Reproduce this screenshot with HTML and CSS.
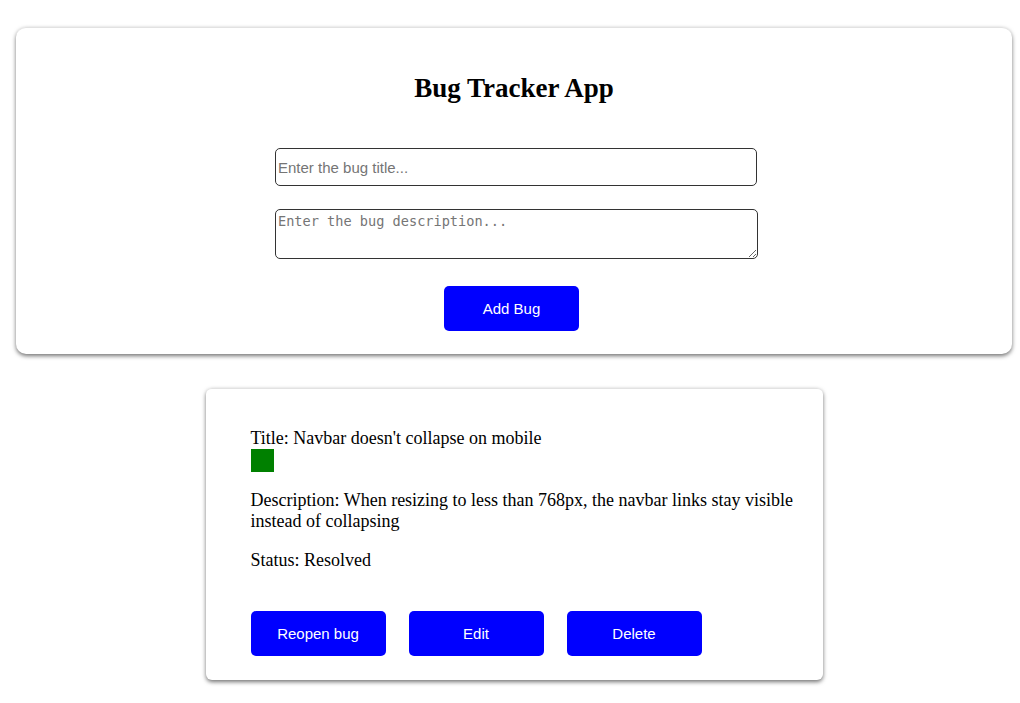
FILE: index.html
```html
<!DOCTYPE html>
<html>
<head>
<meta charset="utf-8">
<link rel="stylesheet" href="styles.css">
</head>
<body>
<div class="page">
  <section class="form-card">
    <h2 class="app-title">Bug Tracker App</h2>
    <input class="title-input" type="text" placeholder="Enter the bug title...">
    <textarea class="desc-input" placeholder="Enter the bug description..."></textarea>
    <button class="btn">Add Bug</button>
  </section>
  <section class="bug-card">
    <div class="bug-title">Title: Navbar doesn't collapse on mobile</div>
    <div class="status-swatch"></div>
    <p class="bug-desc">Description: When resizing to less than 768px, the navbar links stay visible instead of collapsing</p>
    <p class="bug-status">Status: Resolved</p>
    <div class="actions">
      <button class="btn">Reopen bug</button>
      <button class="btn">Edit</button>
      <button class="btn">Delete</button>
    </div>
  </section>
</div>
</body>
</html>
```
FILE: styles.css
```css
html, body {
  margin: 0;
  padding: 0;
  background: #fff;
}
body {
  font-family: "Liberation Serif", "Times New Roman", serif;
  color: #000;
}
.page {
  padding: 27px 8px 16px 16px;
  display: flex;
  flex-direction: column;
  align-items: center;
}
.form-card {
  box-sizing: border-box;
  width: 996px;
  height: 327px;
  border-radius: 10px;
  border-top: 1px solid #e2e2e2;
  box-shadow: 0 2px 4px rgba(0, 0, 0, 0.55);
  display: flex;
  flex-direction: column;
  align-items: center;
  padding-top: 45px;
}
.app-title {
  margin: 0;
  font-size: 27px;
  font-weight: bold;
  line-height: 30px;
  height: 30px;
}
.title-input {
  box-sizing: border-box;
  margin-top: 45px;
  margin-left: 4px;
  width: 482px;
  height: 38px;
  border: 1px solid #333;
  border-radius: 5px;
  padding: 0 2px;
  font-family: "Liberation Sans", Arial, sans-serif;
  font-size: 15px;
  outline: none;
}
.title-input::placeholder {
  color: #757575;
}
.desc-input {
  box-sizing: border-box;
  margin-top: 23px;
  margin-left: 5px;
  width: 483px;
  height: 50px;
  border: 1px solid #333;
  border-radius: 5px;
  padding: 3px 2px;
  font-family: "DejaVu Sans Mono", "Liberation Mono", monospace;
  font-size: 13.6px;
  resize: vertical;
  outline: none;
}
.desc-input::placeholder {
  color: #757575;
}
.btn {
  box-sizing: border-box;
  width: 135px;
  height: 45px;
  border: none;
  border-radius: 5px;
  background: #0000ff;
  color: #fff;
  font-family: "Liberation Sans", Arial, sans-serif;
  font-size: 15px;
  padding: 0;
  cursor: pointer;
}
.form-card .btn {
  margin-top: 27px;
  margin-left: -5px;
}
.bug-card {
  box-sizing: border-box;
  margin-top: 34px;
  width: 617px;
  height: 292px;
  border-radius: 6px;
  border-top: 1px solid #e2e2e2;
  box-shadow: 0 2px 4px rgba(0, 0, 0, 0.55);
  padding: 39px 20px 24px 45px;
  font-size: 18px;
  line-height: 21px;
}
.bug-title {
  height: 21px;
}
.status-swatch {
  width: 23px;
  height: 23px;
  background: #008000;
}
.bug-desc {
  margin: 18px 0 0 0;
}
.bug-status {
  margin: 18px 0 0 0;
}
.actions {
  display: flex;
  gap: 23px;
  margin-top: 40px;
}
```
